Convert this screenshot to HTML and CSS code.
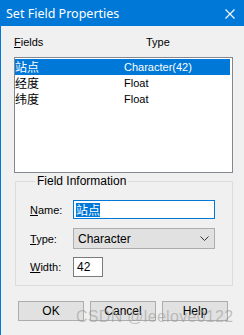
FILE: index.html
```html
<!DOCTYPE html>
<html>
<head>
<meta charset="utf-8">
<link rel="stylesheet" href="styles.css">
</head>
<body>
<div class="win">
  <div class="titlebar">
    <span class="title">Set Field Properties</span>
    <svg class="close" width="10" height="10" viewBox="0 0 10 10"><path d="M0.5 0.5 L9.5 9.5 M9.5 0.5 L0.5 9.5" stroke="#fff" stroke-width="1.1" fill="none"/></svg>
  </div>
  <div class="content">
    <div class="hdr"><span class="h-name"><u>F</u>ields</span><span class="h-type">Type</span></div>
    <div class="list">
      <div class="row sel"><span class="c1 cjk">站点</span><span class="c2">Character(42)</span></div>
      <div class="row"><span class="c1 cjk">经度</span><span class="c2">Float</span></div>
      <div class="row"><span class="c1 cjk">纬度</span><span class="c2">Float</span></div>
    </div>
    <fieldset class="group">
      <legend>Field Information</legend>
      <div class="frow r-name"><span class="lbl"><u>N</u>ame:</span><div class="input focus"><span class="hl cjk">站点</span></div></div>
      <div class="frow r-type"><span class="lbl"><u>T</u>ype:</span><div class="select"><span>Character</span><svg width="9" height="5" viewBox="0 0 9 5"><path d="M0.5 0.5 L4.5 4.5 L8.5 0.5" stroke="#333" stroke-width="1" fill="none"/></svg></div></div>
      <div class="frow r-width"><span class="lbl"><u>W</u>idth:</span><div class="input small">42</div></div>
    </fieldset>
    <div class="buttons">
      <div class="btn">OK</div>
      <div class="btn">Cancel</div>
      <div class="btn">Help</div>
    </div>
  </div>
  <div class="watermark">CSDN @leelove0122</div>
</div>
</body>
</html>
```
FILE: styles.css
```css
html, body { margin: 0; padding: 0; }
body { background: #f0f0f0; font-family: "Liberation Sans", Arial, sans-serif; font-size: 11px; color: #000; }
.win { position: relative; width: 244px; height: 335px; box-sizing: border-box; border-left: 1px solid #0078d7; background: #f0f0f0; overflow: hidden; }
.titlebar { height: 26px; background: #0078d7; display: flex; align-items: center; justify-content: space-between; padding-left: 5px; }
.title { color: #fff; font-size: 12.5px; font-family: "Noto Sans", "Liberation Sans", sans-serif; }
.close { margin-right: 9px; margin-top: 1px; }
.content { padding: 10px 0 0 13px; }
.hdr { display: flex; height: 13px; line-height: 13px; margin-bottom: 8px; }
.h-name { width: 132px; }
.cjk { font-family: "Noto Sans CJK SC", sans-serif; font-size: 12px; }
.list { width: 219px; height: 116px; box-sizing: border-box; border: 1px solid #828790; background: #fff; padding-top: 1px; }
.row { display: flex; height: 16px; line-height: 16px; margin-right: 2px; align-items: center; }
.row.sel { background: #0078d7; color: #fff; }
.c1 { width: 109px; line-height: 16px; }
.group { margin: 2px 0 0 1px; width: 218px; box-sizing: border-box; border: 1px solid #dcdcdc; padding: 12px 0 8px 14px; }
.group legend { padding: 0 2px; margin-left: 5px; font-size: 12px; line-height: 13px; }
.frow { display: flex; align-items: center; }
.lbl { width: 43px; }
.r-type { margin-top: 9px; }
.r-width { margin-top: 8px; }
.input { width: 142px; height: 19px; box-sizing: border-box; border: 1px solid #7a7a7a; background: #fff; display: flex; align-items: center; padding-left: 2px; }
.input.focus { border-color: #0078d7; }
.input.small { width: 30px; height: 20px; border-color: #7a7a7a; padding-left: 3px; font-size: 12px; }
.hl { background: #0078d7; color: #fff; line-height: 14px; }
.select { width: 142px; height: 21px; box-sizing: border-box; border: 1px solid #adadad; background: #e1e1e1; display: flex; align-items: center; justify-content: space-between; padding: 0 5px 0 4px; font-size: 12px; }
.buttons { display: flex; gap: 6px; margin: 15px 0 0 4px; }
.btn { width: 66px; height: 20px; box-sizing: border-box; border: 1px solid #adadad; background: #e1e1e1; display: flex; align-items: center; justify-content: center; font-size: 12px; }
.watermark { position: absolute; left: 75px; top: 308px; font-size: 16px; color: rgba(150,150,150,0.55); font-family: "Liberation Sans", Arial, sans-serif; letter-spacing: 0.3px; pointer-events: none; }
```
